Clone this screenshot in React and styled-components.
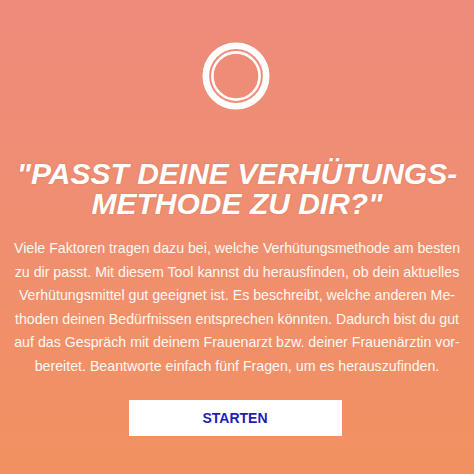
import React from "react";
import styled, { createGlobalStyle } from "styled-components";

const GlobalStyle = createGlobalStyle`
  html, body {
    margin: 0;
    padding: 0;
  }
  body {
    font-family: "Liberation Sans", Arial, sans-serif;
  }
`;

export default function App() {
  return (
    <>
      <GlobalStyle />
      <Page>
        <Logo viewBox="0 0 68 68">
          <circle cx="34" cy="34" r="30.2" fill="none" stroke="#fff" strokeWidth="6.6" />
          <circle cx="34" cy="34" r="23.6" fill="none" stroke="#fff" strokeWidth="2.6" />
        </Logo>

        {/* Titel */}
        <Title>
          "PASST DEINE VERHÜTUNGS-
          <br />
          METHODE ZU DIR?"
        </Title>

        <Text>
          Viele Faktoren tragen dazu bei, welche Verhütungsmethode am besten
          <br />
          zu dir passt. Mit diesem Tool kannst du herausfinden, ob dein aktuelles
          <br />
          Verhütungsmittel gut geeignet ist. Es beschreibt, welche anderen Me-
          <br />
          thoden deinen Bedürfnissen entsprechen könnten. Dadurch bist du gut
          <br />
          auf das Gespräch mit deinem Frauenarzt bzw. deiner Frauenärztin vor-
          <br />
          bereitet. Beantworte einfach fünf Fragen, um es herauszufinden.
        </Text>

        <StartButton>STARTEN</StartButton>
      </Page>
    </>
  );
}

/* ===== styled-components ===== */
const Page = styled.div`
  width: 474px;
  height: 474px;
  box-sizing: border-box;
  overflow: hidden;
  display: flex;
  flex-direction: column;
  align-items: center;
  padding-top: 42px;
  background: linear-gradient(180deg, #ee8b7c 0%, #ef8f70 50%, #f2915f 100%);
  color: #fff;
`;

const Logo = styled.svg`
  width: 68px;
  height: 68px;
  margin-left: -2px;
`;

const Title = styled.h1`
  margin: 49px 0 0;
  font-size: 30px;
  line-height: 30px;
  font-weight: 700;
  font-style: italic;
  text-align: center;
  white-space: nowrap;
  text-shadow: 0 0 2px rgba(160, 70, 50, 0.25);
`;

const Text = styled.p`
  margin: 18px 0 0;
  font-size: 14.2px;
  line-height: 23.5px;
  text-align: center;
  white-space: nowrap;
  color: #fff8f2;
`;

const StartButton = styled.button`
  margin-top: 22px;
  margin-left: -4px;
  width: 213px;
  height: 36px;
  border: none;
  background: #fff;
  color: #1e1eb4;
  font-family: "Liberation Sans", Arial, sans-serif;
  font-size: 14px;
  font-weight: 700;
  cursor: pointer;
`;
